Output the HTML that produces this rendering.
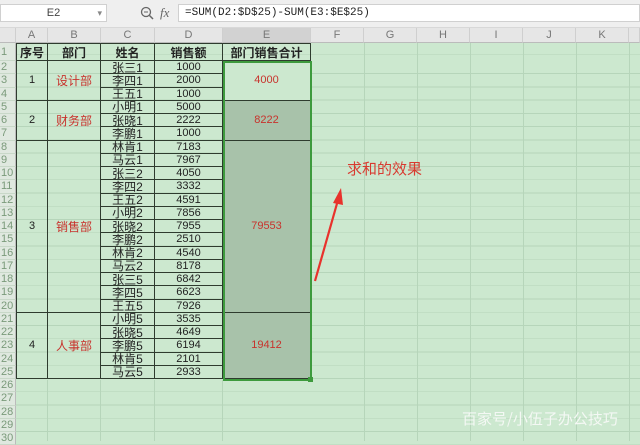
<!DOCTYPE html>
<html><head><meta charset="utf-8"><style>
*{box-sizing:border-box;margin:0;padding:0}
body{width:640px;height:441px;overflow:hidden;background:#cce8cf;font-family:"Liberation Sans","Noto Sans CJK SC",sans-serif;position:relative}
.tb{position:absolute;left:0;top:0;width:640px;height:28px;background:#efefef;border-bottom:1px solid #d8d8d8}
.nb{position:absolute;left:0;top:4px;width:107px;height:18px;background:#fff;border:1px solid #d0d0d0;font-size:11px;color:#444;text-align:center;line-height:16px}
.fb{position:absolute;left:178px;top:4px;width:462px;height:18px;background:#fff;border:1px solid #d0d0d0;font-family:"Liberation Mono",monospace;font-size:11px;line-height:16px;padding-left:6px;color:#222}
.g{position:absolute;left:0;top:28px;display:grid;grid-template-columns:16px 32px 53px 54px 68px 88px 53px 53px 53px 53px 53px 53px 11px;grid-template-rows:15px 18px repeat(29,13.25px);
background-image:repeating-linear-gradient(to bottom,transparent 0,transparent 12.25px,#b6d5ba 12.25px,#b6d5ba 13.25px);background-position:0 33px;}
.vl{position:absolute;top:43px;width:1px;height:398px;background:#b6d5ba}
.vb{position:absolute;top:380px;width:1px;height:61px;background:#b6d5ba}
.ch{background:#e6e6e6;color:#777;font-size:11px;text-align:center;line-height:15px;border-right:1px solid #cfcfcf;border-bottom:1px solid #bbb}
.rh{background:#dfe8df;color:#7a9a7a;font-size:11px;line-height:13px;padding-left:1px;border-bottom:1px solid #c8d8c8;border-right:1px solid #bbb}
.c{border-right:1px solid #2e3b2e;border-bottom:1px solid #2e3b2e;font-size:12px;text-align:center;display:flex;align-items:center;justify-content:center;color:#222;white-space:nowrap}
.h{font-weight:bold;font-size:12px;border-top:1px solid #2e3b2e}
.a{border-left:1px solid #2e3b2e}
.r{color:#c8322c}
.e{background:#a8c2aa;color:#c8322c;font-size:11px}
.sm{font-size:11px}
</style></head><body>
<div class="tb">
<div class="nb">E2<span style="position:absolute;right:4px;color:#888;font-size:9px">▾</span></div>
<svg style="position:absolute;left:140px;top:6px" width="14" height="14"><circle cx="6" cy="6" r="4.5" fill="none" stroke="#666" stroke-width="1.3"/><line x1="9.5" y1="9.5" x2="13" y2="13" stroke="#666" stroke-width="1.5"/><line x1="4" y1="6" x2="8" y2="6" stroke="#666"/></svg>
<div style="position:absolute;left:160px;top:5px;font-family:'Liberation Serif',serif;font-style:italic;font-size:13px;color:#666">fx</div>
<div class="fb">=SUM(D2:$D$25)-SUM(E3:$E$25)</div>
</div>
<div class="vl" style="left:364px"></div><div class="vl" style="left:417px"></div><div class="vl" style="left:470px"></div><div class="vl" style="left:523px"></div><div class="vl" style="left:576px"></div><div class="vl" style="left:629px"></div>
<div class="vb" style="left:47px"></div><div class="vb" style="left:100px"></div><div class="vb" style="left:154px"></div><div class="vb" style="left:222px"></div>
<div class="g">
<div class="ch"></div><div class="ch">A</div><div class="ch">B</div><div class="ch">C</div><div class="ch">D</div><div class="ch" style="background:#d2d2d2">E</div><div class="ch">F</div><div class="ch">G</div><div class="ch">H</div><div class="ch">I</div><div class="ch">J</div><div class="ch">K</div><div class="ch"></div>
<div class="rh" style="grid-row:2;grid-column:1;line-height:18px">1</div>
<div class="rh" style="grid-row:3;grid-column:1">2</div><div class="rh" style="grid-row:4;grid-column:1">3</div><div class="rh" style="grid-row:5;grid-column:1">4</div><div class="rh" style="grid-row:6;grid-column:1">5</div><div class="rh" style="grid-row:7;grid-column:1">6</div><div class="rh" style="grid-row:8;grid-column:1">7</div><div class="rh" style="grid-row:9;grid-column:1">8</div><div class="rh" style="grid-row:10;grid-column:1">9</div><div class="rh" style="grid-row:11;grid-column:1">10</div><div class="rh" style="grid-row:12;grid-column:1">11</div><div class="rh" style="grid-row:13;grid-column:1">12</div><div class="rh" style="grid-row:14;grid-column:1">13</div><div class="rh" style="grid-row:15;grid-column:1">14</div><div class="rh" style="grid-row:16;grid-column:1">15</div><div class="rh" style="grid-row:17;grid-column:1">16</div><div class="rh" style="grid-row:18;grid-column:1">17</div><div class="rh" style="grid-row:19;grid-column:1">18</div><div class="rh" style="grid-row:20;grid-column:1">19</div><div class="rh" style="grid-row:21;grid-column:1">20</div><div class="rh" style="grid-row:22;grid-column:1">21</div><div class="rh" style="grid-row:23;grid-column:1">22</div><div class="rh" style="grid-row:24;grid-column:1">23</div><div class="rh" style="grid-row:25;grid-column:1">24</div><div class="rh" style="grid-row:26;grid-column:1">25</div><div class="rh" style="grid-row:27;grid-column:1">26</div><div class="rh" style="grid-row:28;grid-column:1">27</div><div class="rh" style="grid-row:29;grid-column:1">28</div><div class="rh" style="grid-row:30;grid-column:1">29</div><div class="rh" style="grid-row:31;grid-column:1">30</div>

<div class="c h a" style="grid-row:2;grid-column:2">序号</div>
<div class="c h" style="grid-row:2;grid-column:3">部门</div>
<div class="c h" style="grid-row:2;grid-column:4">姓名</div>
<div class="c h" style="grid-row:2;grid-column:5">销售额</div>
<div class="c h" style="grid-row:2;grid-column:6">部门销售合计</div>

<div class="c a sm" style="grid-row:3/6;grid-column:2">1</div>
<div class="c r" style="grid-row:3/6;grid-column:3">设计部</div>
<div class="c a sm" style="grid-row:6/9;grid-column:2">2</div>
<div class="c r" style="grid-row:6/9;grid-column:3">财务部</div>
<div class="c a sm" style="grid-row:9/22;grid-column:2">3</div>
<div class="c r" style="grid-row:9/22;grid-column:3">销售部</div>
<div class="c a sm" style="grid-row:22/27;grid-column:2">4</div>
<div class="c r" style="grid-row:22/27;grid-column:3">人事部</div>

<div class="c" style="grid-row:3;grid-column:4">张三1</div><div class="c sm" style="grid-row:3;grid-column:5">1000</div>
<div class="c" style="grid-row:4;grid-column:4">李四1</div><div class="c sm" style="grid-row:4;grid-column:5">2000</div>
<div class="c" style="grid-row:5;grid-column:4">王五1</div><div class="c sm" style="grid-row:5;grid-column:5">1000</div>
<div class="c" style="grid-row:6;grid-column:4">小明1</div><div class="c sm" style="grid-row:6;grid-column:5">5000</div>
<div class="c" style="grid-row:7;grid-column:4">张晓1</div><div class="c sm" style="grid-row:7;grid-column:5">2222</div>
<div class="c" style="grid-row:8;grid-column:4">李鹏1</div><div class="c sm" style="grid-row:8;grid-column:5">1000</div>
<div class="c" style="grid-row:9;grid-column:4">林肯1</div><div class="c sm" style="grid-row:9;grid-column:5">7183</div>
<div class="c" style="grid-row:10;grid-column:4">马云1</div><div class="c sm" style="grid-row:10;grid-column:5">7967</div>
<div class="c" style="grid-row:11;grid-column:4">张三2</div><div class="c sm" style="grid-row:11;grid-column:5">4050</div>
<div class="c" style="grid-row:12;grid-column:4">李四2</div><div class="c sm" style="grid-row:12;grid-column:5">3332</div>
<div class="c" style="grid-row:13;grid-column:4">王五2</div><div class="c sm" style="grid-row:13;grid-column:5">4591</div>
<div class="c" style="grid-row:14;grid-column:4">小明2</div><div class="c sm" style="grid-row:14;grid-column:5">7856</div>
<div class="c" style="grid-row:15;grid-column:4">张晓2</div><div class="c sm" style="grid-row:15;grid-column:5">7955</div>
<div class="c" style="grid-row:16;grid-column:4">李鹏2</div><div class="c sm" style="grid-row:16;grid-column:5">2510</div>
<div class="c" style="grid-row:17;grid-column:4">林肯2</div><div class="c sm" style="grid-row:17;grid-column:5">4540</div>
<div class="c" style="grid-row:18;grid-column:4">马云2</div><div class="c sm" style="grid-row:18;grid-column:5">8178</div>
<div class="c" style="grid-row:19;grid-column:4">张三5</div><div class="c sm" style="grid-row:19;grid-column:5">6842</div>
<div class="c" style="grid-row:20;grid-column:4">李四5</div><div class="c sm" style="grid-row:20;grid-column:5">6623</div>
<div class="c" style="grid-row:21;grid-column:4">王五5</div><div class="c sm" style="grid-row:21;grid-column:5">7926</div>
<div class="c" style="grid-row:22;grid-column:4">小明5</div><div class="c sm" style="grid-row:22;grid-column:5">3535</div>
<div class="c" style="grid-row:23;grid-column:4">张晓5</div><div class="c sm" style="grid-row:23;grid-column:5">4649</div>
<div class="c" style="grid-row:24;grid-column:4">李鹏5</div><div class="c sm" style="grid-row:24;grid-column:5">6194</div>
<div class="c" style="grid-row:25;grid-column:4">林肯5</div><div class="c sm" style="grid-row:25;grid-column:5">2101</div>
<div class="c" style="grid-row:26;grid-column:4">马云5</div><div class="c sm" style="grid-row:26;grid-column:5">2933</div>

<div class="c" style="grid-row:3/6;grid-column:6;color:#c8322c;font-size:11px;background:#cce8cf">4000</div>
<div class="c e" style="grid-row:6/9;grid-column:6">8222</div>
<div class="c e" style="grid-row:9/22;grid-column:6">79553</div>
<div class="c e" style="grid-row:22/27;grid-column:6">19412</div>
</div>
<div style="position:absolute;left:223px;top:61px;width:89px;height:320px;border:2px solid #3d9a3d"></div>
<div style="position:absolute;left:308px;top:377px;width:5px;height:5px;background:#3d9a3d"></div>
<svg style="position:absolute;left:0;top:0" width="640" height="441"><line x1="315" y1="281" x2="338" y2="200" stroke="#e8322c" stroke-width="2.2"/><polygon points="341,188 333,203 343,205" fill="#e8322c"/></svg>
<div style="position:absolute;left:347px;top:158px;font-size:15px;color:#d83a30;font-family:'Noto Sans CJK SC',sans-serif">求和的效果</div>
<div style="position:absolute;left:462px;top:408px;font-size:15px;color:#f4f8f4;font-family:'Noto Sans CJK SC',sans-serif">百家号/小伍子办公技巧</div>
</body></html>
